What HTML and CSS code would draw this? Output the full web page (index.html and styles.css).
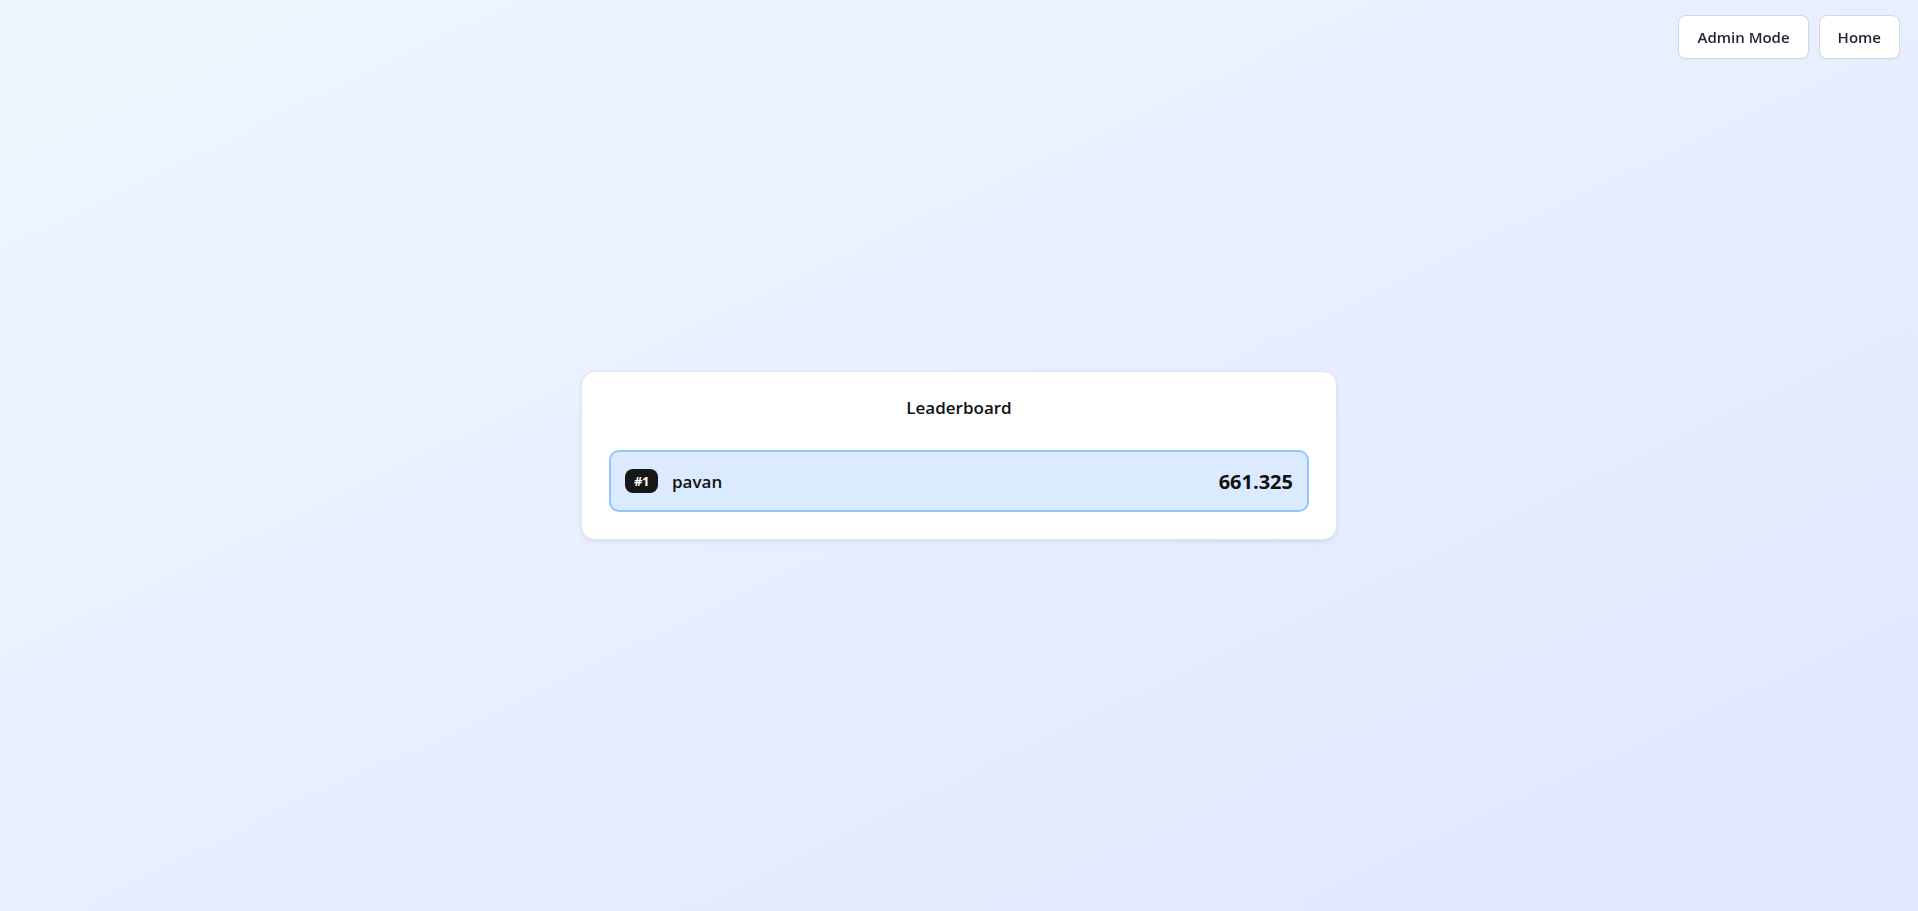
FILE: index.html
```html
<!DOCTYPE html>
<html lang="en">
<head>
<meta charset="utf-8">
<title>Leaderboard</title>
<link rel="stylesheet" href="styles.css">
</head>
<body>
<nav class="topnav">
  <button class="nav-btn">Admin Mode</button>
  <button class="nav-btn">Home</button>
</nav>
<main class="page">
  <section class="card">
    <h2 class="card-title">Leaderboard</h2>
    <ul class="board">
      <li class="entry entry-top">
        <span class="rank">#1</span>
        <span class="name">pavan</span>
        <span class="score">661.325</span>
      </li>
    </ul>
  </section>
</main>
</body>
</html>
```
FILE: styles.css
```css
* { box-sizing: border-box; }
html, body { margin: 0; padding: 0; }
body {
  min-height: 100vh;
  font-family: "Open Sans", "Noto Sans", "Liberation Sans", sans-serif;
  color: #111;
  background: linear-gradient(to bottom right, #eff6ff, #e0e7ff);
}
.topnav {
  position: fixed;
  top: 15px;
  right: 18px;
  display: flex;
  gap: 10px;
}
.nav-btn {
  height: 44px;
  padding: 0 18px;
  font-family: inherit;
  font-size: 15px;
  font-weight: 600;
  color: #1e2433;
  background: #fff;
  border: 1px solid #d4d8e0;
  border-radius: 8px;
  box-shadow: 0 1px 2px rgba(0,0,0,0.04);
}
.page {
  min-height: 100vh;
  display: flex;
  align-items: center;
  justify-content: center;
}
.card {
  width: 756px;
  padding: 26px 27px 27px;
  background: #fff;
  border: 1px solid #e3e6ee;
  border-radius: 14px;
  box-shadow: 0 2px 5px rgba(0,0,0,0.08);
}
.card-title {
  margin: 0 0 32px;
  text-align: center;
  font-size: 17px;
  line-height: 20px;
  font-weight: 600;
  color: #111;
}
.board {
  list-style: none;
  margin: 0;
  padding: 0;
}
.entry {
  display: flex;
  align-items: center;
  height: 62px;
  padding: 0 14px;
  border-radius: 10px;
}
.entry-top {
  background: #dbeafe;
  border: 2px solid #93c5fd;
}
.rank {
  display: inline-flex;
  align-items: center;
  justify-content: center;
  width: 33px;
  height: 24px;
  border-radius: 8px;
  background: #171717;
  color: #fff;
  font-size: 13px;
  font-weight: 700;
  letter-spacing: -0.5px;
}
.name {
  margin-left: 14px;
  font-size: 17px;
  font-weight: 600;
  color: #111;
}
.score {
  margin-left: auto;
  font-size: 20px;
  font-weight: 700;
  color: #111;
}
```
